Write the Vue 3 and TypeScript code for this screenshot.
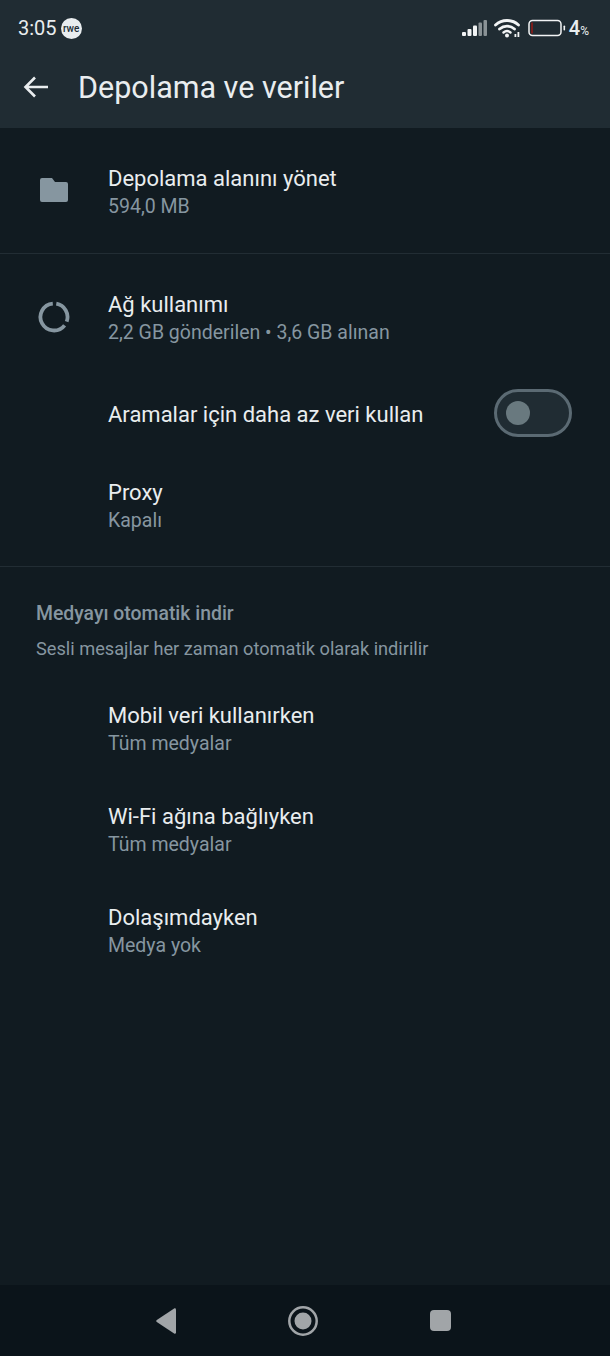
<template>
  <div class="screen">
    <header class="appbar">
      <div class="status">
        <div class="status-left">
          <span class="clock">3:05</span>
          <span class="badge">rwe</span>
        </div>
        <div class="status-right">
          <svg class="signal" width="26" height="18" viewBox="0 0 26 18">
            <rect x="0" y="13" width="4" height="4" rx="1" fill="#f2f4f5" />
            <rect x="5.500" y="10" width="4" height="7" rx="1" fill="#f2f4f5" />
            <rect x="11" y="6.500" width="4" height="10.500" rx="1" fill="#f2f4f5" />
            <rect x="16.500" y="3.500" width="3.500" height="13.500" rx="1" fill="#8a9296" />
            <rect x="21.500" y="1" width="3.500" height="16" rx="1" fill="#8a9296" />
          </svg>
          <svg class="wifi" width="28" height="20" viewBox="0 0 28 20" fill="none">
            <path d="M1.500 7C8 1 18 1 24.500 7" stroke="#f2f4f5" stroke-width="2.800" stroke-linecap="round" />
            <path d="M5.500 11C10 7.200 16 7.200 20.500 11" stroke="#f2f4f5" stroke-width="2.800" stroke-linecap="round" />
            <path d="M9.500 14.500C11.600 12.800 14.400 12.800 16.500 14.500" stroke="#f2f4f5" stroke-width="2.400" stroke-linecap="round" />
            <circle cx="13" cy="17.500" r="2" fill="#f2f4f5" />
            <rect x="20.500" y="16" width="1.800" height="3" fill="#f2f4f5" />
            <rect x="23.500" y="14" width="1.800" height="5" fill="#f2f4f5" />
          </svg>
          <svg class="battery" width="38" height="18" viewBox="0 0 38 18" fill="none">
            <rect x="1" y="1.500" width="32" height="15" rx="3.500" stroke="#f2f4f5" stroke-width="1.500" />
            <rect x="3" y="3.500" width="2" height="11" fill="#7a1d1b" />
            <rect x="35.500" y="6.500" width="1.600" height="5" rx="0.800" fill="#f2f4f5" />
          </svg>
          <span class="level">4<small>%</small></span>
        </div>
      </div>
      <div class="toolbar">
        <svg class="back" width="28" height="28" viewBox="0 0 28 28" fill="none">
          <path d="M26 14H3.500M13 4.500L3.500 14L13 23.500" stroke="#e9edef" stroke-width="2.600" />
        </svg>
        <h1>Depolama ve veriler</h1>
      </div>
    </header>

    <main class="content">
      <section class="group first">
        <div class="row">
          <div class="icon">
            <svg width="28" height="24" viewBox="0 0 28 24">
              <path d="M2 0h10l3 4h11a2 2 0 0 1 2 2v16a2 2 0 0 1-2 2H2a2 2 0 0 1-2-2V2a2 2 0 0 1 2-2z" fill="#8696a0" />
            </svg>
          </div>
          <div class="text">
            <div class="title">Depolama alanını yönet</div>
            <div class="sub">594,0 MB</div>
          </div>
        </div>
      </section>

      <section class="group second">
        <div class="row">
          <div class="icon">
            <svg width="32" height="32" viewBox="0 0 32 32" fill="none">
              <path d="M26.600 24.300A13.500 13.500 0 1 1 14.800 2.550" stroke="#8696a0" stroke-width="3.800" />
              <path d="M18.300 2.700A13.500 13.500 0 0 1 28.700 20.600" stroke="#8696a0" stroke-width="3.800" />
            </svg>
          </div>
          <div class="text">
            <div class="title">Ağ kullanımı</div>
            <div class="sub">2,2 GB gönderilen • 3,6 GB alınan</div>
          </div>
        </div>
        <div class="row toggle-row">
          <div class="icon"></div>
          <div class="text grow">
            <div class="title">Aramalar için daha az veri kullan</div>
          </div>
          <div class="switch"><span class="knob"></span></div>
        </div>
        <div class="row proxy">
          <div class="icon"></div>
          <div class="text">
            <div class="title">Proxy</div>
            <div class="sub">Kapalı</div>
          </div>
        </div>
      </section>

      <section class="group media">
        <div class="heading">Medyayı otomatik indir</div>
        <div class="hint">Sesli mesajlar her zaman otomatik olarak indirilir</div>
        <div v-for="item in mediaRows" :key="item.title" class="row media-row">
          <div class="icon"></div>
          <div class="text">
            <div class="title">{{ item.title }}</div>
            <div class="sub">{{ item.sub }}</div>
          </div>
        </div>
      </section>
    </main>

    <nav class="navbar">
      <svg width="20" height="26" viewBox="0 0 20 26">
        <path d="M18.500 0.300a1.300 1.300 0 0 1 1.500 1.200v23a1.300 1.300 0 0 1-1.500 1.200L0.800 14a1.300 1.300 0 0 1 0-2z" fill="#a1a5a8" />
      </svg>
      <svg width="30" height="30" viewBox="0 0 30 30" fill="none">
        <circle cx="15" cy="15" r="13.700" stroke="#a1a5a8" stroke-width="2.500" />
        <circle cx="15" cy="15" r="8.500" fill="#a1a5a8" />
      </svg>
      <span class="square"></span>
    </nav>
  </div>
</template>

<script setup lang="ts">
const mediaRows: { title: string; sub: string }[] = [
  { title: "Mobil veri kullanırken", sub: "Tüm medyalar" },
  { title: "Wi-Fi ağına bağlıyken", sub: "Tüm medyalar" },
  { title: "Dolaşımdayken", sub: "Medya yok" },
];
</script>

<style>
html,
body {
  margin: 0;
  background: #111b21;
}
</style>

<style scoped>
.screen {
  width: 610px;
  height: 1356px;
  display: flex;
  flex-direction: column;
  background: #111b21;
  font-family: Roboto, "Noto Sans", sans-serif;
  overflow: hidden;
}

.appbar {
  height: 128px;
  background: #202c33;
  flex: none;
}

.status {
  height: 56px;
  display: flex;
  align-items: center;
  justify-content: space-between;
  padding: 0 21px 0 18px;
}

.status-left,
.status-right {
  display: flex;
  align-items: center;
}

.clock {
  font-size: 20px;
  color: #e9edef;
}

.badge {
  width: 21px;
  height: 21px;
  margin-left: 4px;
  border-radius: 50%;
  background: #e9edef;
  color: #202c33;
  font-size: 10px;
  font-weight: 500;
  line-height: 21px;
  text-align: center;
}

.signal {
  margin-right: 6px;
}

.wifi {
  margin-right: 6px;
}

.level {
  margin-left: 3px;
  font-size: 20px;
  font-weight: 500;
  color: #e9edef;
}

.level small {
  font-size: 12px;
  font-weight: 400;
}

.toolbar {
  height: 62px;
  display: flex;
  align-items: center;
  padding-left: 22px;
}

.back {
  margin-right: 28px;
}

h1 {
  margin: 0;
  font-size: 30.500px;
  font-weight: 400;
  color: #e9edef;
}

.group {
  border-bottom: 1px solid #222d34;
}

.first {
  height: 126px;
  box-sizing: border-box;
  display: flex;
  align-items: center;
}

.first .text {
  margin-top: 5px;
}

.first .icon {
  margin-bottom: 2px;
}

.second {
  height: 313px;
  box-sizing: border-box;
  padding-top: 37px;
}

.second .row:first-child .icon {
  margin-bottom: 4px;
}

.media {
  border-bottom: none;
  padding-top: 34px;
}

.row {
  display: flex;
  align-items: center;
  padding: 0 38px 0 36px;
  width: 100%;
  box-sizing: border-box;
}

.icon {
  width: 36px;
  margin-right: 36px;
  flex: none;
  display: flex;
  align-items: center;
  justify-content: center;
}

.grow {
  flex: 1;
}

.title {
  font-size: 22px;
  line-height: 28px;
  color: #e9edef;
}

.sub {
  font-size: 19.500px;
  line-height: 28px;
  color: #8696a0;
}

.toggle-row {
  height: 48px;
  margin-top: 42px;
}

.toggle-row .title {
  padding-top: 4px;
}

.proxy {
  margin-top: 42px;
}

.switch {
  width: 78px;
  height: 48px;
  box-sizing: border-box;
  border: 3px solid #5b6a73;
  border-radius: 24px;
  background: #202c33;
  display: flex;
  align-items: center;
  padding-left: 9px;
}

.knob {
  width: 24px;
  height: 24px;
  border-radius: 50%;
  background: #69797f;
}

.heading {
  padding-left: 36px;
  font-size: 19.400px;
  font-weight: 500;
  line-height: 26px;
  color: #8696a0;
}

.hint {
  margin-top: 9px;
  padding-left: 36px;
  font-size: 18.200px;
  line-height: 26px;
  color: #8696a0;
}

.media-row {
  margin-top: 45px;
}

.hint + .media-row {
  margin-top: 40px;
}

.navbar {
  margin-top: auto;
  height: 71px;
  flex: none;
  background: #0b141a;
  display: flex;
  align-items: center;
  justify-content: center;
  gap: 112px;
  padding-right: 4px;
}

.square {
  width: 21px;
  height: 21px;
  border-radius: 4px;
  background: #a1a5a8;
}
</style>
